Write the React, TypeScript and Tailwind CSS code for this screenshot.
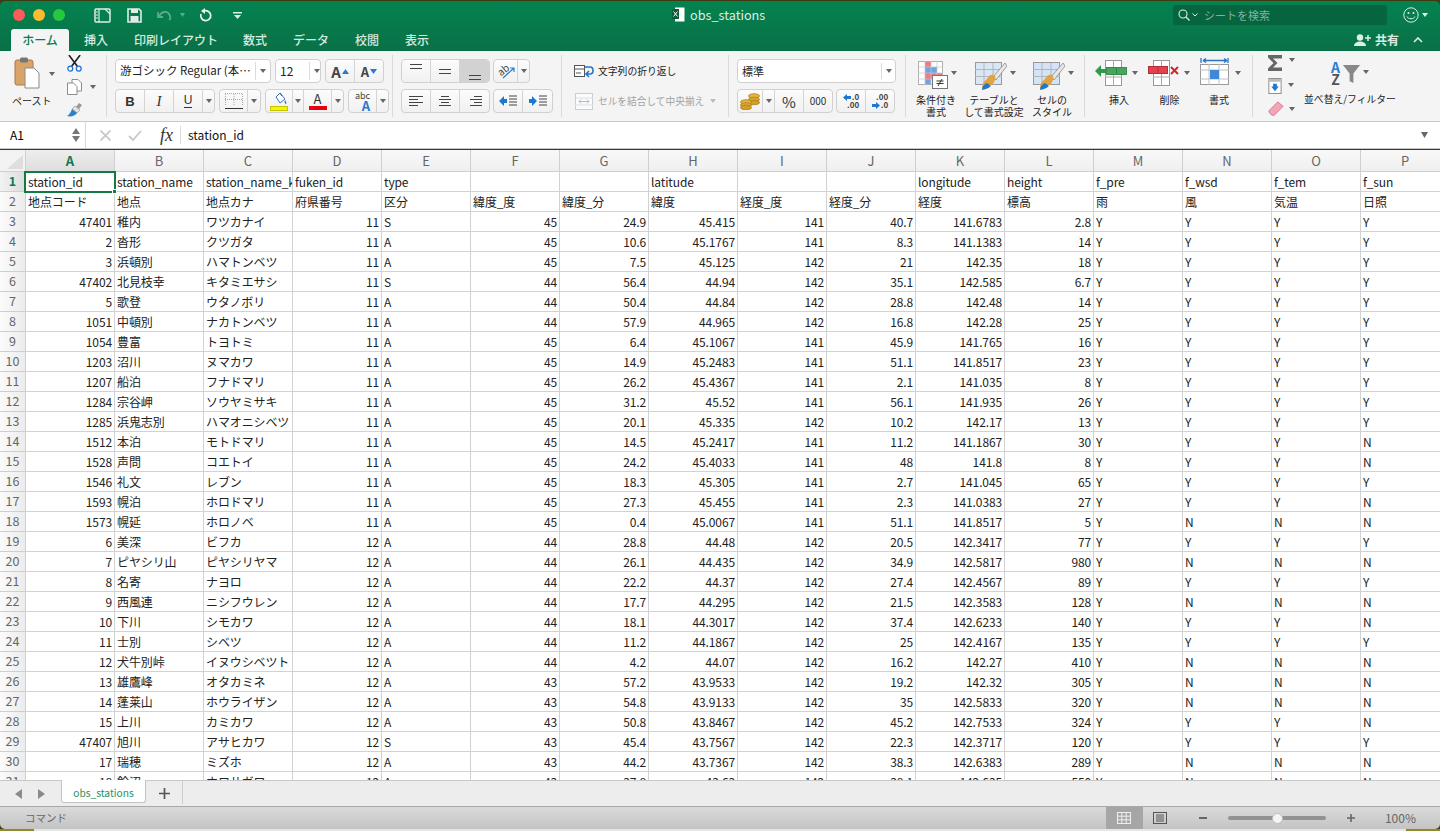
import type { ReactNode } from 'react';

type Row = (string | number)[];

const columns = ['A', 'B', 'C', 'D', 'E', 'F', 'G', 'H', 'I', 'J', 'K', 'L', 'M', 'N', 'O', 'P'];

const headRow1 = ['station_id', 'station_name', 'station_name_k', 'fuken_id', 'type', '', '', 'latitude', '', '', 'longitude', 'height', 'f_pre', 'f_wsd', 'f_tem', 'f_sun'];
const headRow2 = ['地点コード', '地点', '地点カナ', '府県番号', '区分', '緯度_度', '緯度_分', '緯度', '経度_度', '経度_分', '経度', '標高', '雨', '風', '気温', '日照'];

const rows: Row[] = [
	[47401, '稚内', 'ワツカナイ', 11, 'S', 45, 24.9, 45.415, 141, 40.7, 141.6783, 2.8, 'Y', 'Y', 'Y', 'Y'],
	[2, '沓形', 'クツガタ', 11, 'A', 45, 10.6, 45.1767, 141, 8.3, 141.1383, 14, 'Y', 'Y', 'Y', 'Y'],
	[3, '浜頓別', 'ハマトンベツ', 11, 'A', 45, 7.5, 45.125, 142, 21, 142.35, 18, 'Y', 'Y', 'Y', 'Y'],
	[47402, '北見枝幸', 'キタミエサシ', 11, 'S', 44, 56.4, 44.94, 142, 35.1, 142.585, 6.7, 'Y', 'Y', 'Y', 'Y'],
	[5, '歌登', 'ウタノボリ', 11, 'A', 44, 50.4, 44.84, 142, 28.8, 142.48, 14, 'Y', 'Y', 'Y', 'Y'],
	[1051, '中頓別', 'ナカトンベツ', 11, 'A', 44, 57.9, 44.965, 142, 16.8, 142.28, 25, 'Y', 'Y', 'Y', 'Y'],
	[1054, '豊富', 'トヨトミ', 11, 'A', 45, 6.4, 45.1067, 141, 45.9, 141.765, 16, 'Y', 'Y', 'Y', 'Y'],
	[1203, '沼川', 'ヌマカワ', 11, 'A', 45, 14.9, 45.2483, 141, 51.1, 141.8517, 23, 'Y', 'Y', 'Y', 'Y'],
	[1207, '船泊', 'フナドマリ', 11, 'A', 45, 26.2, 45.4367, 141, 2.1, 141.035, 8, 'Y', 'Y', 'Y', 'Y'],
	[1284, '宗谷岬', 'ソウヤミサキ', 11, 'A', 45, 31.2, 45.52, 141, 56.1, 141.935, 26, 'Y', 'Y', 'Y', 'Y'],
	[1285, '浜鬼志別', 'ハマオニシベツ', 11, 'A', 45, 20.1, 45.335, 142, 10.2, 142.17, 13, 'Y', 'Y', 'Y', 'Y'],
	[1512, '本泊', 'モトドマリ', 11, 'A', 45, 14.5, 45.2417, 141, 11.2, 141.1867, 30, 'Y', 'Y', 'Y', 'N'],
	[1528, '声問', 'コエトイ', 11, 'A', 45, 24.2, 45.4033, 141, 48, 141.8, 8, 'Y', 'Y', 'Y', 'N'],
	[1546, '礼文', 'レブン', 11, 'A', 45, 18.3, 45.305, 141, 2.7, 141.045, 65, 'Y', 'Y', 'Y', 'Y'],
	[1593, '幌泊', 'ホロドマリ', 11, 'A', 45, 27.3, 45.455, 141, 2.3, 141.0383, 27, 'Y', 'Y', 'Y', 'N'],
	[1573, '幌延', 'ホロノベ', 11, 'A', 45, 0.4, 45.0067, 141, 51.1, 141.8517, 5, 'Y', 'N', 'N', 'N'],
	[6, '美深', 'ビフカ', 12, 'A', 44, 28.8, 44.48, 142, 20.5, 142.3417, 77, 'Y', 'Y', 'Y', 'Y'],
	[7, 'ピヤシリ山', 'ピヤシリヤマ', 12, 'A', 44, 26.1, 44.435, 142, 34.9, 142.5817, 980, 'Y', 'N', 'N', 'N'],
	[8, '名寄', 'ナヨロ', 12, 'A', 44, 22.2, 44.37, 142, 27.4, 142.4567, 89, 'Y', 'Y', 'Y', 'Y'],
	[9, '西風連', 'ニシフウレン', 12, 'A', 44, 17.7, 44.295, 142, 21.5, 142.3583, 128, 'Y', 'N', 'N', 'N'],
	[10, '下川', 'シモカワ', 12, 'A', 44, 18.1, 44.3017, 142, 37.4, 142.6233, 140, 'Y', 'Y', 'Y', 'N'],
	[11, '士別', 'シベツ', 12, 'A', 44, 11.2, 44.1867, 142, 25, 142.4167, 135, 'Y', 'Y', 'Y', 'Y'],
	[12, '犬牛別峠', 'イヌウシベツト', 12, 'A', 44, 4.2, 44.07, 142, 16.2, 142.27, 410, 'Y', 'N', 'N', 'N'],
	[13, '雄鷹峰', 'オタカミネ', 12, 'A', 43, 57.2, 43.9533, 142, 19.2, 142.32, 305, 'Y', 'N', 'N', 'N'],
	[14, '蓬莱山', 'ホウライザン', 12, 'A', 43, 54.8, 43.9133, 142, 35, 142.5833, 320, 'Y', 'N', 'N', 'N'],
	[15, '上川', 'カミカワ', 12, 'A', 43, 50.8, 43.8467, 142, 45.2, 142.7533, 324, 'Y', 'Y', 'Y', 'N'],
	[47407, '旭川', 'アサヒカワ', 12, 'S', 43, 45.4, 43.7567, 142, 22.3, 142.3717, 120, 'Y', 'Y', 'Y', 'Y'],
	[17, '瑞穂', 'ミズホ', 12, 'A', 43, 44.2, 43.7367, 142, 38.3, 142.6383, 289, 'Y', 'N', 'N', 'N'],
	[18, '鈴沼', 'ホロサガワ', 12, 'A', 43, 37.8, 43.63, 142, 38.1, 142.635, 550, 'Y', 'N', 'N', 'N'],
];

function Caret({ color = '#666' }: { color?: string }) {
	return (
		<svg width="6" height="4" viewBox="0 0 6 4" className="shrink-0">
			<path d="M0 0h6L3 4z" fill={color} />
		</svg>
	);
}

function RowHead({ n, active }: { n: number; active?: boolean }) {
	return (
		<div
			className={
				active
					? 'flex items-center justify-center border-r border-b border-[#cfcfcf] bg-gradient-to-r from-[#f3f3f3] to-[#dcdcdc] text-[12.5px] font-bold text-[#0f7a4f]'
					: 'flex items-center justify-center border-r border-b border-[#cfcfcf] bg-gradient-to-r from-[#fbfbfb] to-[#ececec] text-[12.5px] text-[#666]'
			}
		>
			{n}
		</div>
	);
}

function Cell({ value }: { value: string | number }) {
	const numeric = typeof value === 'number';
	return (
		<div
			className={
				numeric
					? 'overflow-hidden whitespace-nowrap border-r border-b border-[#d2d2d2] bg-white pr-[2px] text-right text-[12px] leading-[20px] tracking-[-0.12px] text-[#222]'
					: 'overflow-hidden whitespace-nowrap border-r border-b border-[#d2d2d2] bg-white pl-[2px] text-[12px] leading-[20px] tracking-[-0.12px] text-[#222]'
			}
		>
			{value}
		</div>
	);
}

function Seg({ w, children, last, active }: { w: string; children: ReactNode; last?: boolean; active?: boolean }) {
	return (
		<div
			className={
				w +
				(last ? '' : ' border-r border-[#d4d4d4]') +
				(active ? ' bg-[#d2d2d2]' : '') +
				' flex h-full shrink-0 items-center justify-center'
			}
		>
			{children}
		</div>
	);
}

function BtnGroup({ children }: { children: ReactNode }) {
	return (
		<div className="flex h-[24px] shrink-0 overflow-hidden rounded-[4px] border border-[#d0d0d0] bg-gradient-to-b from-[#fcfcfc] to-[#f1f1f1]">
			{children}
		</div>
	);
}

function Sep() {
	return <div className="mt-[4px] h-[62px] w-px shrink-0 bg-[#dadada]" />;
}

function Lines({ kind }: { kind: 'l' | 'c' | 'r' }) {
	const x = kind === 'l' ? [0, 0, 0, 0] : kind === 'c' ? [3, 1, 3, 1] : [6, 2, 6, 2];
	const w = kind === 'l' ? [14, 9, 14, 9] : [8, 12, 8, 12];
	return (
		<svg width="14" height="11" viewBox="0 0 14 11">
			{[0, 3, 6, 9].map((y, i) => (
				<rect key={y} x={x[i]} y={y} width={w[i]} height="1" fill="#444" />
			))}
		</svg>
	);
}

function TableBrush({ fill }: { fill: string }) {
	return (
		<svg width="32" height="30" viewBox="0 0 32 30">
			<rect x="0.5" y="1.5" width="26" height="22" fill="#fff" stroke="#999" />
			<rect x="1" y="2" width="25" height="21" fill={fill} />
			<path d="M0 8.5h27M0 15.5h27M9 2v22M18 2v22" stroke="#b5b5b5" strokeWidth="1" />
			<path d="M30 2 18 16l3 3L32 5z" fill="#e8e8e8" stroke="#888" strokeWidth="0.8" />
			<path d="M14 15c4-3 8 0 6 4-1 3-3 5-6 5-3 1-5 2-7 4 0-5 2-8 4-9z" fill="#e3a33e" />
			<path d="M7 29c0-3 2-6 5-7l4 3c-3 3-6 3-9 4z" fill="#1f77d0" />
		</svg>
	);
}

function Ribbon() {
	return (
		<div className="flex h-[70px] shrink-0 bg-[#f4f4f4] pl-[14px] text-[10px] text-[#222]">
			{/* clipboard */}
			<div className="flex w-[92px] shrink-0">
				<div className="flex w-[50px] shrink-0 flex-col">
					<div className="flex h-[43px] items-start pt-[6px]">
						<svg width="26" height="32" viewBox="0 0 26 32" className="shrink-0">
							<rect x="1" y="3" width="18" height="25" rx="2" fill="#d9a46a" stroke="#a87a48" />
							<rect x="6" y="0.5" width="8" height="5" rx="1.5" fill="#777" />
							<path d="M11 11h9l5 5v15H11z" fill="#fff" stroke="#8a8a8a" />
						</svg>
						<div className="ml-[9px] mt-[15px]">
							<Caret />
						</div>
					</div>
					<span className="-ml-[2px] text-[10px] leading-[14px]">ペースト</span>
				</div>
				<div className="flex w-[32px] shrink-0 flex-col pl-[3px]">
					<svg width="15" height="17" viewBox="0 0 16 18" className="mt-[4px]">
						<path d="M2 0l9 12M14 0 5 12" stroke="#222" strokeWidth="1.8" />
						<circle cx="3.5" cy="14.5" r="2.6" fill="none" stroke="#1f6fd0" strokeWidth="1.3" />
						<circle cx="12.5" cy="14.5" r="2.6" fill="none" stroke="#1f6fd0" strokeWidth="1.3" />
					</svg>
					<div className="mt-[7px] flex items-center gap-[8px]">
						<svg width="15" height="16" viewBox="0 0 15 16" className="shrink-0">
							<path d="M5 .5h6l3.5 3.5v8H5z" fill="#fff" stroke="#8c8c8c" />
							<path d="M.5 4h6l3.5 3.5v8H.5z" fill="#fff" stroke="#8c8c8c" />
						</svg>
						<Caret />
					</div>
					<svg width="16" height="16" viewBox="0 0 16 16" className="mt-[7px]">
						<path d="M9 5l3-4 3 2-3 4z" fill="#999" />
						<path d="M8 4l5 4-3 3-5-4z" fill="#e3e3e3" stroke="#888" strokeWidth="0.6" />
						<path d="M5 7l5 4c-2 3-6 4-10 3 2-1 4-4 5-7z" fill="#2f7fd0" />
					</svg>
				</div>
			</div>
			<Sep />
			{/* font */}
			<div className="flex w-[285px] shrink-0 flex-col gap-[6px] pl-[8px] pt-[8px]">
				<div className="flex gap-[4px]">
					<div className="flex h-[24px] w-[156px] shrink-0 items-center whitespace-nowrap rounded-[4px] border border-[#d0d0d0] bg-white pl-[4px] text-[11.5px]">
						<span className="w-[136px] overflow-hidden border-r border-[#dcdcdc]">游ゴシック Regular (本…</span>
						<span className="ml-[4px]"><Caret /></span>
					</div>
					<div className="flex h-[24px] w-[46px] shrink-0 items-center rounded-[4px] border border-[#d0d0d0] bg-white pl-[4px] text-[12px]">
						<span className="w-[30px] border-r border-[#dcdcdc]">12</span>
						<span className="ml-[4px]"><Caret /></span>
					</div>
					<BtnGroup>
						<Seg w="w-[29px]">
							<span className="text-[15px] font-semibold leading-none text-[#444]">A</span>
							<svg width="7" height="5" viewBox="0 0 7 5" className="ml-[1px]"><path d="M0 5h7L3.5 0z" fill="#2a7ad4" /></svg>
						</Seg>
						<Seg w="w-[28px]" last>
							<span className="text-[13px] font-semibold leading-none text-[#444]">A</span>
							<svg width="7" height="5" viewBox="0 0 7 5" className="ml-[1px]"><path d="M0 0h7L3.5 5z" fill="#2a7ad4" /></svg>
						</Seg>
					</BtnGroup>
				</div>
				<div className="flex gap-[4px]">
					<BtnGroup>
						<Seg w="w-[29px]"><span className="font-['Liberation_Sans',sans-serif] text-[13px] font-bold leading-none text-[#333]">B</span></Seg>
						<Seg w="w-[29px]"><span className="font-['Liberation_Serif',serif] text-[15px] italic leading-none text-[#333]">I</span></Seg>
						<Seg w="w-[29px]"><span className="border-b border-[#333] font-['Liberation_Sans',sans-serif] text-[12px] leading-[13px] text-[#333]">U</span></Seg>
						<Seg w="w-[11px]" last><Caret /></Seg>
					</BtnGroup>
					<BtnGroup>
						<Seg w="w-[28px]">
							<svg width="18" height="17" viewBox="0 0 18 17">
								<path d="M.5 1v11M9 1v11M17.5 1v11M0 .5h18M0 6.5h18" stroke="#aaa" strokeDasharray="1 1" />
								<rect x="0" y="15" width="18" height="1" fill="#333" />
							</svg>
						</Seg>
						<Seg w="w-[12px]" last><Caret /></Seg>
					</BtnGroup>
					<BtnGroup>
						<Seg w="w-[27px]">
							<svg width="18" height="19" viewBox="0 0 18 19">
								<path d="M6 5l4-4 5 6-5 4z" fill="#fff" stroke="#2f72c4" strokeWidth="1" />
								<path d="M10 1l2 3" stroke="#555" />
								<path d="M15 8c1 2 2 3 1 4-1 0-2-2-1-4z" fill="#2f72c4" />
								<rect x="0.5" y="14.5" width="17" height="4" fill="#f6f600" stroke="#c4c400" />
							</svg>
						</Seg>
						<Seg w="w-[11px]"><Caret /></Seg>
						<Seg w="w-[28px]">
							<div className="flex flex-col items-center">
								<span className="text-[13px] leading-[13px] text-[#333]">A</span>
								<span className="mt-[1px] h-[4px] w-[18px] bg-[#e60012]" />
							</div>
						</Seg>
						<Seg w="w-[11px]" last><Caret /></Seg>
					</BtnGroup>
					<BtnGroup>
						<Seg w="w-[28px]">
							<div className="flex flex-col items-end leading-none">
								<span className="text-[9px] leading-[9px] text-[#444]">abc</span>
								<span className="text-[13px] font-bold leading-[11px] text-[#2a7ad4]">A</span>
							</div>
						</Seg>
						<Seg w="w-[11px]" last><Caret /></Seg>
					</BtnGroup>
				</div>
			</div>
			<Sep />
			{/* alignment */}
			<div className="flex w-[168px] shrink-0 flex-col gap-[6px] pl-[8px] pt-[8px]">
				<div className="flex gap-[3px]">
					<BtnGroup>
						<Seg w="w-[29px]"><div className="-mt-[10px] flex flex-col gap-[3px]"><span className="block h-px w-[12px] bg-[#444]" /><span className="block h-px w-[12px] bg-[#444]" /></div></Seg>
						<Seg w="w-[29px]"><div className="flex flex-col gap-[3px]"><span className="block h-px w-[12px] bg-[#444]" /><span className="block h-px w-[12px] bg-[#444]" /></div></Seg>
						<Seg w="w-[29px]" last active><div className="mt-[12px] flex flex-col gap-[3px]"><span className="block h-px w-[12px] bg-[#444]" /><span className="block h-px w-[12px] bg-[#444]" /></div></Seg>
					</BtnGroup>
					<BtnGroup>
						<Seg w="w-[24px]">
							<svg width="18" height="16" viewBox="0 0 18 16">
								<text x="1" y="11" fontSize="10" fill="#444" transform="rotate(-40 6 8)">ab</text>
								<path d="M6 15 17 5M13 5h4v4" stroke="#2a7ad4" strokeWidth="1.2" fill="none" />
							</svg>
						</Seg>
						<Seg w="w-[11px]" last><Caret /></Seg>
					</BtnGroup>
				</div>
				<div className="flex gap-[3px]">
					<BtnGroup>
						<Seg w="w-[29px]"><Lines kind="l" /></Seg>
						<Seg w="w-[29px]"><Lines kind="c" /></Seg>
						<Seg w="w-[29px]" last><Lines kind="r" /></Seg>
					</BtnGroup>
					<BtnGroup>
						<Seg w="w-[29px]">
							<svg width="18" height="12" viewBox="0 0 18 12">
								<path d="M0 6l5-5v3h3v4H5v3z" fill="#1f77d0" />
								<path d="M10 1h8M10 4h8M10 7h8M10 10h8" stroke="#444" />
							</svg>
						</Seg>
						<Seg w="w-[29px]" last>
							<svg width="18" height="12" viewBox="0 0 18 12">
								<path d="M8 6 3 1v3H0v4h3v3z" fill="#1f77d0" />
								<path d="M10 1h8M10 4h8M10 7h8M10 10h8" stroke="#444" />
							</svg>
						</Seg>
					</BtnGroup>
				</div>
			</div>
			<Sep />
			{/* wrap and merge */}
			<div className="flex w-[166px] shrink-0 flex-col pl-[12px] pt-[10px]">
				<div className="flex h-[20px] items-center">
					<svg width="21" height="14" viewBox="0 0 21 14" className="shrink-0">
						<rect x="0.5" y="1.5" width="10" height="11" fill="#fff" stroke="#555" />
						<path d="M1 5h10M2 9h5" stroke="#555" />
						<path d="M11 3h5c4 0 4 7 0 7h-3M15 7l-3 3 3 3" stroke="#1f77d0" strokeWidth="1.6" fill="none" />
					</svg>
					<span className="ml-[3px] whitespace-nowrap text-[9.8px]">文字列の折り返し</span>
				</div>
				<div className="mt-[10px] flex h-[20px] items-center text-[#a2a2a2]">
					<svg width="18" height="17" viewBox="0 0 18 17" className="ml-[1px] shrink-0">
						<rect x="0.5" y="0.5" width="17" height="16" fill="#fbfbfb" stroke="#ccc" />
						<path d="M0 5h18M0 12h18" stroke="#ddd" />
						<path d="M4 8.5h10M4 8.5l2-2M4 8.5l2 2M14 8.5l-2-2M14 8.5l-2 2" stroke="#9fc1e6" />
					</svg>
					<span className="ml-[5px] whitespace-nowrap text-[9.7px]">セルを結合して中央揃え</span>
					<span className="ml-[6px]"><Caret color="#bbb" /></span>
				</div>
			</div>
			<Sep />
			{/* number */}
			<div className="flex w-[176px] shrink-0 flex-col gap-[6px] pl-[8px] pt-[8px]">
				<div className="flex h-[24px] w-[159px] shrink-0 items-center rounded-[4px] border border-[#d0d0d0] bg-white pl-[4px] text-[11px]">
					<span className="w-[140px] border-r border-[#dcdcdc]">標準</span>
					<span className="ml-[4px]"><Caret /></span>
				</div>
				<div className="flex gap-[3px]">
					<BtnGroup>
						<Seg w="w-[25px]">
							<svg width="20" height="17" viewBox="0 0 20 17">
								<ellipse cx="14" cy="3" rx="5.5" ry="2.3" fill="#e5b53f" stroke="#a77a18" strokeWidth="0.7" />
								<ellipse cx="14" cy="6.5" rx="5.5" ry="2.3" fill="#dca92f" stroke="#a77a18" strokeWidth="0.7" />
								<ellipse cx="14" cy="9.5" rx="5.5" ry="2.3" fill="#d39e24" stroke="#a77a18" strokeWidth="0.7" />
								<ellipse cx="6" cy="9" rx="5.5" ry="2.3" fill="#e5b53f" stroke="#a77a18" strokeWidth="0.7" />
								<ellipse cx="6" cy="12" rx="5.5" ry="2.3" fill="#dca92f" stroke="#a77a18" strokeWidth="0.7" />
								<ellipse cx="6" cy="14.5" rx="5.5" ry="2.3" fill="#d39e24" stroke="#a77a18" strokeWidth="0.7" />
							</svg>
						</Seg>
						<Seg w="w-[12px]"><Caret /></Seg>
						<Seg w="w-[29px]"><span className="text-[15px] leading-none text-[#333]">%</span></Seg>
						<Seg w="w-[28px]" last><span className="text-[10px] leading-none text-[#333]">000</span></Seg>
					</BtnGroup>
					<BtnGroup>
						<Seg w="w-[29px]">
							<div className="flex flex-col items-end text-[8px] font-semibold leading-[8px] text-[#444]">
								<span className="flex items-center">
									<svg width="8" height="7" viewBox="0 0 8 7" className="mr-[1px]"><path d="M0 3.5 4 0v2h4v3H4v2z" fill="#1f77d0" /></svg>
									.0
								</span>
								<span>.00</span>
							</div>
						</Seg>
						<Seg w="w-[28px]" last>
							<div className="flex flex-col items-end text-[8px] font-semibold leading-[8px] text-[#444]">
								<span>.00</span>
								<span className="flex items-center">
									<svg width="8" height="7" viewBox="0 0 8 7" className="mr-[1px]"><path d="M8 3.5 4 0v2H0v3h4v2z" fill="#1f77d0" /></svg>
									.0
								</span>
							</div>
						</Seg>
					</BtnGroup>
				</div>
			</div>
			<Sep />
			{/* styles */}
			<div className="flex w-[178px] shrink-0 text-center text-[10px] leading-[12px]">
				<div className="flex w-[60px] shrink-0 flex-col items-center pt-[10px]">
					<div className="ml-[2px] flex h-[33px] items-start gap-[3px]">
						<svg width="30" height="29" viewBox="0 0 30 29" className="shrink-0">
							<rect x="0.5" y="0.5" width="24" height="23" fill="#fff" stroke="#b0b0b0" />
							<rect x="7" y="1" width="6" height="5" fill="#ef7b85" />
							<rect x="7" y="6" width="12" height="6" fill="#6aa6e6" />
							<rect x="7" y="12" width="17" height="6" fill="#ef7b85" />
							<rect x="7" y="18" width="6" height="5" fill="#6aa6e6" />
							<path d="M0 6h25M0 12h25M0 18h25M7 0v24M13 0v24M19 0v24" stroke="#c6c6c6" strokeWidth="0.7" fill="none" />
							<rect x="14.5" y="14.5" width="15" height="13" fill="#fff" stroke="#777" />
							<path d="M18.5 20h7M18.5 22.5h7M24 18l-4 7" stroke="#333" fill="none" />
						</svg>
						<span className="mt-[10px]"><Caret /></span>
					</div>
					<span className="whitespace-nowrap">条件付き<br />書式</span>
				</div>
				<div className="flex w-[58px] shrink-0 flex-col items-center pt-[10px]">
					<div className="ml-[1px] flex h-[33px] items-start gap-[3px]">
						<TableBrush fill="#d9e6f5" />
						<span className="mt-[10px]"><Caret /></span>
					</div>
					<span className="-ml-[2px] whitespace-nowrap">テーブルと<br />して書式設定</span>
				</div>
				<div className="flex w-[58px] shrink-0 flex-col items-center pt-[10px]">
					<div className="flex h-[33px] items-start gap-[3px]">
						<TableBrush fill="#d4e3f6" />
						<span className="mt-[10px]"><Caret /></span>
					</div>
					<span className="-ml-[2px] whitespace-nowrap">セルの<br />スタイル</span>
				</div>
			</div>
			<Sep />
			{/* cells */}
			<div className="flex w-[167px] shrink-0 pl-[10px] text-center text-[10px] leading-[12px]">
				<div className="flex w-[53px] shrink-0 flex-col pt-[9px]">
					<div className="flex h-[34px] items-start gap-[5px]">
						<svg width="32" height="26" viewBox="0 0 32 26" className="shrink-0">
							<rect x="10.5" y="0.5" width="16" height="25" fill="#fff" stroke="#999" />
							<path d="M10 8h17M10 17h17M18.5 0v26" stroke="#aaa" />
							<rect x="11.5" y="7.5" width="20" height="7" fill="#46a65a" stroke="#2a7b3c" strokeWidth="0.8" />
							<path d="M21.5 8v6" stroke="#2a7b3c" strokeWidth="0.8" />
							<path d="M0 11 6 5v12z" fill="#2f9a4a" />
							<rect x="5" y="9" width="6" height="4" fill="#2f9a4a" />
						</svg>
						<span className="mt-[11px]"><Caret /></span>
					</div>
					<span className="-ml-[5px] whitespace-nowrap">挿入</span>
				</div>
				<div className="flex w-[52px] shrink-0 flex-col pt-[9px]">
					<div className="flex h-[34px] items-start gap-[5px]">
						<svg width="31" height="26" viewBox="0 0 31 26" className="shrink-0">
							<rect x="5.5" y="0.5" width="16" height="25" fill="#fff" stroke="#999" />
							<path d="M5 17h17M13.5 0v26" stroke="#aaa" />
							<rect x="0.5" y="6.5" width="19" height="7" fill="#e5424d" stroke="#b72d36" />
							<path d="M10 7v6" stroke="#b72d36" />
							<path d="M23 7l7 7M30 7l-7 7" stroke="#d8232e" strokeWidth="2" />
						</svg>
						<span className="mt-[11px]"><Caret /></span>
					</div>
					<span className="-ml-[9px] whitespace-nowrap">削除</span>
				</div>
				<div className="flex w-[52px] shrink-0 flex-col pt-[6px]">
					<div className="flex h-[37px] items-start gap-[5px]">
						<svg width="30" height="28" viewBox="0 0 30 28" className="shrink-0">
							<path d="M1 1v5M28 1v5M3 3.5h24M3 3.5l3-2M3 3.5l3 2M27 3.5l-3-2M27 3.5l-3 2" stroke="#2a74c4" strokeWidth="1.3" fill="none" />
							<rect x="0.5" y="7.5" width="28" height="20" fill="#fff" stroke="#999" />
							<path d="M0 13h29M0 22h29M9 7v21M19 7v21" stroke="#c0c0c0" />
							<rect x="10" y="13" width="9" height="9" fill="#3f88d8" />
						</svg>
						<span className="mt-[14px]"><Caret /></span>
					</div>
					<span className="-ml-[14px] whitespace-nowrap">書式</span>
				</div>
			</div>
			<Sep />
			{/* editing */}
			<div className="flex shrink-0">
				<div className="flex w-[46px] shrink-0 flex-col pl-[15px]">
					<div className="flex h-[23px] items-start gap-[7px] pt-[4px]">
						<svg width="14" height="16" viewBox="0 0 14 16" className="shrink-0"><path d="M0 0h14v3.5H5l4.5 4.5L5 12.500h9V16H0v-2.500L5.500 8 0 2.500z" fill="#666" /></svg>
						<span className="mt-[3px]"><Caret /></span>
					</div>
					<div className="flex h-[23px] items-start gap-[6px] pt-[4px]">
						<svg width="14" height="16" viewBox="0 0 14 17" className="shrink-0">
							<rect x="0.500" y="0.500" width="13" height="16" fill="#fff" stroke="#888" />
							<rect x="1" y="1" width="12" height="3" fill="#bbb" />
							<path d="M7 14 3 9h2V6h4v3h2z" fill="#1f77d0" />
						</svg>
						<span className="mt-[5px]"><Caret /></span>
					</div>
					<div className="-ml-[1px] flex h-[24px] items-start gap-[4px] pt-[4px]">
						<svg width="18" height="16" viewBox="0 0 18 18" className="shrink-0">
							<path d="M1 11 11 1l6 5-10 10c-2 1-6-2-6-5z" fill="#f3a5b8" stroke="#c45f78" strokeWidth="0.8" />
						</svg>
						<span className="mt-[6px]"><Caret /></span>
					</div>
				</div>
				<div className="ml-[5px] flex w-[92px] shrink-0 flex-col items-center text-[9.8px] leading-[12px]">
					<div className="-ml-[2px] flex h-[42px] items-start pt-[10px]">
						<div className="flex w-[12px] flex-col items-center text-[14px] font-semibold leading-[12px]">
							<span className="text-[#2a7ad4]">A</span>
							<span className="text-[#555]">Z</span>
						</div>
						<svg width="19" height="19" viewBox="0 0 18 20" className="mt-[4px] shrink-0"><path d="M0 0c6-1 12-1 18 0l-7 9v10l-4-2V9z" fill="#888" /></svg>
						<span className="ml-[2px] mt-[9px]"><Caret /></span>
					</div>
					<span className="whitespace-nowrap">並べ替え/フィルター</span>
				</div>
			</div>
		</div>
	);
}

function TitleBar() {
	return (
		<div className="h-[50px] shrink-0 bg-gradient-to-b from-[#03834f] to-[#0a7047] text-white">
			<div className="flex h-[28px] items-center pl-[13px]">
				<div className="flex w-[52px] shrink-0 gap-[8px]">
					<span className="block h-[12px] w-[12px] rounded-full bg-[#fc5b57]" />
					<span className="block h-[12px] w-[12px] rounded-full bg-[#fdbc2e]" />
					<span className="block h-[12px] w-[12px] rounded-full bg-[#27c840]" />
				</div>
				<div className="ml-[30px] flex w-[180px] shrink-0 items-center">
					<svg width="17" height="15" viewBox="0 0 17 15" className="ml-[-1px] mr-[16px]">
						<rect x="1" y="1" width="15" height="13" rx="1" fill="none" stroke="#dfeee8" strokeWidth="1.5" />
						<path d="M5 1v13M2 4h2M2 7h2M2 10h2M11 1l5 5" stroke="#dfeee8" strokeWidth="1.2" />
					</svg>
					<svg width="15" height="15" viewBox="0 0 15 15" className="mr-[15px]">
						<path d="M1 1h11l2 2v11H1z" fill="none" stroke="#dfeee8" strokeWidth="1.6" />
						<rect x="4" y="1" width="7" height="4" fill="#dfeee8" />
						<rect x="3.500" y="8" width="8" height="6" fill="#dfeee8" />
					</svg>
					<svg width="15" height="12" viewBox="0 0 15 12" className="mr-[8px]">
						<path d="M1 3v5h5M2 8c2-6 9-7 11-1 1 3-1 4-1 4" fill="none" stroke="#5fa88a" strokeWidth="1.8" />
					</svg>
					<span className="mr-[14px]"><svg width="5" height="4" viewBox="0 0 5 4"><path d="M0 0h5L2.500 4z" fill="#5fa88a" /></svg></span>
					<svg width="14" height="15" viewBox="0 0 14 15" className="mr-[20px]">
						<path d="M5 3a5 5 0 1 1-3 3" fill="none" stroke="#e6f2ed" strokeWidth="1.8" />
						<path d="M6 0v6L2 3z" fill="#e6f2ed" />
					</svg>
					<svg width="9" height="7" viewBox="0 0 9 7">
						<rect x="0" y="0" width="9" height="1.500" fill="#dfeee8" />
						<path d="M1 3h7L4.500 7z" fill="#dfeee8" />
					</svg>
				</div>
				<div className="ml-[397px] flex w-[100px] shrink-0 items-center">
					<svg width="13" height="15" viewBox="0 0 13 15" className="mr-[5px] shrink-0">
						<rect x="3" y="0.500" width="9.500" height="14" fill="#fff" />
						<rect x="0" y="2" width="7" height="10" fill="#0c5a36" />
						<path d="M1.500 4.500l4 5M5.500 4.500l-4 5" stroke="#fff" />
					</svg>
					<span className="whitespace-nowrap text-[12.7px] text-[#dcefe6]">obs_stations</span>
				</div>
				<div className="ml-[401px] flex h-[20px] w-[214px] shrink-0 items-center rounded-[3px] bg-[#06643f] pl-[5px] text-[11px] text-[#7fb59d]">
					<svg width="12" height="12" viewBox="0 0 12 12"><circle cx="5" cy="5" r="4" fill="none" stroke="#dcefe6" strokeWidth="1.100" /><path d="m8 8 3.500 3.500" stroke="#dcefe6" strokeWidth="1.300" /></svg>
					<svg width="6" height="4" viewBox="0 0 6 4" className="ml-[2px]"><path d="M.5.5 3 3 5.500.5" stroke="#dcefe6" fill="none" /></svg>
					<span className="ml-[6px]">シートを検索</span>
				</div>
				<svg width="16" height="16" viewBox="0 0 16 16" className="ml-[16px] shrink-0">
					<circle cx="8" cy="8" r="7.200" fill="none" stroke="#dcefe6" />
					<circle cx="5.500" cy="6" r="1" fill="#dcefe6" />
					<circle cx="10.500" cy="6" r="1" fill="#dcefe6" />
					<path d="M4 9.500c1 3 7 3 8 0" fill="none" stroke="#dcefe6" />
				</svg>
				<svg width="6" height="4" viewBox="0 0 6 4" className="ml-[3px]"><path d="M0 0h6L3 4z" fill="#dcefe6" /></svg>
			</div>
			<div className="flex h-[22px] items-end pl-[11px] text-[12px] font-medium text-[#d7ebe2]">
				<div className="flex h-[22px] w-[58px] shrink-0 items-center justify-center rounded-t-[3px] bg-[#f4f4f4] text-[#0f7a4f]">ホーム</div>
				<div className="flex h-[22px] flex-1 items-center whitespace-nowrap">
					<span className="ml-[15px]">挿入</span>
					<span className="ml-[26px]">印刷レイアウト</span>
					<span className="ml-[25px]">数式</span>
					<span className="ml-[26px]">データ</span>
					<span className="ml-[26px]">校閲</span>
					<span className="ml-[26px]">表示</span>
				</div>
				<div className="flex h-[22px] w-[86px] shrink-0 items-center">
					<svg width="17" height="12" viewBox="0 0 17 12" className="shrink-0">
						<circle cx="6" cy="3.500" r="3.200" fill="#dcefe6" />
						<path d="M0 12c0-6 12-6 12 0z" fill="#dcefe6" />
						<path d="M14 1v6M11 4h6" stroke="#dcefe6" strokeWidth="1.500" />
					</svg>
					<span className="ml-[4px] font-bold">共有</span>
					<svg width="10" height="6" viewBox="0 0 10 6" className="ml-[14px]"><path d="M1 5l4-4 4 4" fill="none" stroke="#dcefe6" strokeWidth="1.600" /></svg>
				</div>
			</div>
		</div>
	);
}

function FormulaBar() {
	return (
		<div className="flex h-[28px] shrink-0 border-y border-[#c9c9c9] bg-white">
			<div className="flex w-[86px] shrink-0 items-center justify-between border-r border-[#d8d8d8] pl-[10px] pr-[5px] text-[12px]">
				<span>A1</span>
				<div className="flex flex-col gap-[2px]">
					<svg width="8" height="6" viewBox="0 0 8 6"><path d="M0 6h8L4 0z" fill="#777" /></svg>
					<svg width="8" height="6" viewBox="0 0 8 6"><path d="M0 0h8L4 6z" fill="#777" /></svg>
				</div>
			</div>
			<div className="flex w-[74px] shrink-0 items-center pl-[14px]">
				<svg width="11" height="11" viewBox="0 0 11 11" className="shrink-0"><path d="M.5.5l10 10M10.500.5l-10 10" stroke="#c8c8c8" strokeWidth="1.800" /></svg>
				<svg width="14" height="11" viewBox="0 0 14 11" className="ml-[17px] shrink-0"><path d="M1 6l4 4 8-9" fill="none" stroke="#c8c8c8" strokeWidth="1.800" /></svg>
			</div>
			<span className="flex w-[20px] shrink-0 items-center font-['Liberation_Serif',serif] text-[18px] italic leading-none text-[#333]">
				fx
			</span>
			<div className="my-[4px] w-px shrink-0 bg-[#dcdcdc]" />
			<span className="ml-[7px] flex flex-1 items-center text-[12px] text-[#111]">station_id</span>
			<div className="flex w-[19px] shrink-0 items-center">
				<svg width="7" height="6" viewBox="0 0 7 6"><path d="M0 0h7L3.500 6z" fill="#666" /></svg>
			</div>
		</div>
	);
}

function SheetGrid() {
	return (
		<div className="relative mt-[1px] min-h-0 flex-1 overflow-hidden bg-white">
			<div className="grid w-[1450px] grid-cols-[26px_repeat(16,89px)] grid-rows-[22px] auto-rows-[20px]">
				<div className="relative border-r border-b border-[#cfcfcf] bg-[#f3f3f3]">
					<svg width="16" height="14" viewBox="0 0 16 14" className="absolute right-[2px] bottom-[2px]"><path d="M16 0v14H0z" fill="#dedede" /></svg>
				</div>
				{columns.map((c, i) => (
					<div
						key={c}
						className={
							i === 0
								? 'flex items-center justify-center border-r border-b border-[#cfcfcf] bg-gradient-to-b from-[#eeeeee] to-[#dedede] text-[13px] font-bold text-[#0f7a4f]'
								: 'flex items-center justify-center border-r border-b border-[#cfcfcf] bg-gradient-to-b from-[#f9f9f9] to-[#efefef] text-[13px] text-[#666]'
						}
					>
						{c}
					</div>
				))}
				<RowHead n={1} active />
				{headRow1.map((v, i) => (
					<Cell key={i} value={v} />
				))}
				<RowHead n={2} />
				{headRow2.map((v, i) => (
					<Cell key={i} value={v} />
				))}
				{rows.map((row, r) => (
					<div key={r} className="contents">
						<RowHead n={r + 3} />
						{row.map((v, i) => (
							<Cell key={i} value={v} />
						))}
					</div>
				))}
			</div>
			{/* selected cell A1 */}
			<div className="absolute top-[21px] left-[24px] h-[22px] w-[92px] border-2 border-[#107c41]">
				<div className="absolute -right-[3px] -bottom-[3px] h-[5px] w-[5px] border border-white bg-[#107c41]" />
			</div>
		</div>
	);
}

function SheetTabs() {
	return (
		<div className="flex h-[26px] shrink-0 items-start border-t border-[#c8c8c8] bg-[#ededed]">
			<div className="flex w-[61px] shrink-0 items-center gap-[16px] pl-[15px] pt-[8px]">
				<svg width="7" height="10" viewBox="0 0 7 10"><path d="M7 0v10L0 5z" fill="#8a8a8a" /></svg>
				<svg width="7" height="10" viewBox="0 0 7 10"><path d="M0 0v10l7-5z" fill="#8a8a8a" /></svg>
			</div>
			<div className="-mt-px flex h-[23px] w-[85px] shrink-0 items-center justify-center rounded-b-[3px] border-r border-b border-l border-[#c4c4c4] bg-white pt-[3px] text-[10.2px] text-[#1f9160]">
				obs_stations
			</div>
			<div className="flex h-[23px] w-[37px] shrink-0 items-center justify-center border-r border-[#cfcfcf] pt-[2px]">
				<svg width="11" height="11" viewBox="0 0 11 11"><path d="M5.500 0v11M0 5.500h11" stroke="#555" strokeWidth="1.700" /></svg>
			</div>
		</div>
	);
}

function StatusBar() {
	return (
		<div className="flex h-[23px] shrink-0 items-center border-t border-[#a8a8a8] bg-gradient-to-b from-[#dadada] to-[#c4c4c4] text-[#666]">
			<span className="ml-[25px] text-[10.5px]">コマンド</span>
			<div className="ml-auto flex h-full w-[37px] items-center justify-center bg-[#a6a6a6]">
				<svg width="14" height="12" viewBox="0 0 14 12"><path d="M.5 0v12M4.800 0v12M9.200 0v12M13.500 0v12M0 .5h14M0 4.200h14M0 7.800h14M0 11.500h14" stroke="#eee" /></svg>
			</div>
			<svg width="14" height="12" viewBox="0 0 14 12" className="ml-[10px] shrink-0">
				<rect x="0.500" y="0.500" width="13" height="11" fill="none" stroke="#555" />
				<path d="M3 3h8M3 5h8M3 7h8M3 9h8" stroke="#555" />
			</svg>
			<div className="ml-[32px] h-[2px] w-[8px] shrink-0 bg-[#666]" />
			<div className="ml-[21px] flex h-[4px] w-[98px] shrink-0 items-center rounded-full bg-[#929292]">
				<span className="ml-[44px] block h-[11px] w-[11px] rounded-full border border-[#bbb] bg-[#f4f4f4]" />
			</div>
			<svg width="8" height="8" viewBox="0 0 8 8" className="ml-[21px] shrink-0"><path d="M4 0v8M0 4h8" stroke="#666" strokeWidth="1.600" /></svg>
			<span className="ml-[30px] mr-[24px] text-[12px]">100%</span>
		</div>
	);
}

export default function App() {
	return (
		<div className="h-[831px] w-[1440px] overflow-hidden bg-[#3f3a14] pt-px font-['Noto_Sans_CJK_JP','Noto_Sans',sans-serif]">
			<div className="flex h-[828px] flex-col overflow-hidden rounded-[5px]">
				<TitleBar />
				<Ribbon />
				<FormulaBar />
				<SheetGrid />
				<SheetTabs />
				<StatusBar />
			</div>
			{/* desktop showing under the window */}
			<div className="flex h-[2px]">
				<div className="w-[34px] bg-[#8f8a2a]" />
				<div className="flex-1 bg-[#e6e6e6]" />
				<div className="w-[34px] bg-[#8f8a2a]" />
			</div>
		</div>
	);
}
